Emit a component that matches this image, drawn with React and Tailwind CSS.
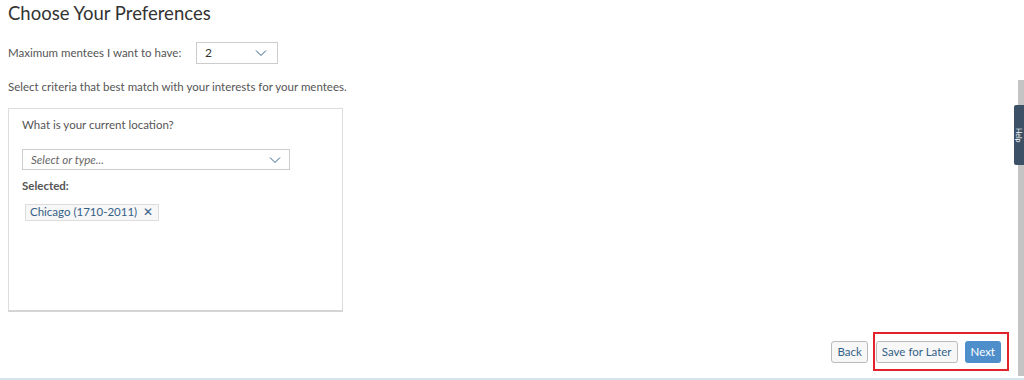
import React from 'react';

const Chevron = ({ className }) => (
  <svg className={className} width="12" height="8" viewBox="0 0 12 8" fill="none">
    <path d="M1 1.5L6 6.5L11 1.5" stroke="#346187" strokeWidth="1" />
  </svg>
);

const App = () => {
  return (
    <div
      className="relative w-[1024px] h-[380px] overflow-hidden bg-white text-[#333]"
      style={{ fontFamily: 'Lato, "Liberation Sans", sans-serif' }}
    >
      <div className="flex flex-col h-full pl-2">
        {/* Title */}
        <h1 className="text-[18.5px] leading-6 pt-[1px] text-[#333]">Choose Your Preferences</h1>

        {/* Max mentees */}
        <div className="flex items-center mt-[17px] h-[22px]">
          <span className="text-[11.5px] text-[#555] w-[188px]">Maximum mentees I want to have:</span>
          <div className="flex items-center justify-between w-[82px] h-[22px] border border-[#ccc] bg-white px-2">
            <span className="text-[12px] text-[#333]">2</span>
            <Chevron className="mr-[2px]" />
          </div>
        </div>

        <p className="text-[11.5px] text-[#555] mt-[15px] leading-4">
          Select criteria that best match with your interests for your mentees.
        </p>

        {/* Criteria card */}
        <div className="mt-[13px] w-[335px] h-[204px] border border-[#ddd] border-b-2 border-b-[#d5d5d5] px-[13px] pt-[7px]">
          <p className="text-[11.5px] text-[#555]">What is your current location?</p>
          <div className="mt-[16px] flex items-center justify-between w-[268px] h-[21px] border border-[#ccc] pl-2 pr-[8px]">
            <span className="text-[11.5px] italic text-[#666]">Select or type...</span>
            <Chevron />
          </div>
          <p className="mt-[7px] text-[11.5px] font-bold text-[#555]">Selected:</p>
          <div className="mt-[9px] ml-[3px] inline-flex items-center h-[17px] border border-[#ddd] bg-[#f7f7f7] pl-[4px] pr-[5px] gap-[6px]">
            <span className="text-[11.5px] text-[#346187] leading-none">Chicago (1710-2011)</span>
            <span className="text-[11.5px] text-[#346187] leading-none">✕</span>
          </div>
        </div>

        {/* Footer buttons */}
        <div className="flex justify-end items-center mt-auto mb-[7px] pr-[15px]">
          <button className="h-[22px] px-[5px] border border-[#bbb] rounded-[3px] bg-[#f7f7f7] text-[11.5px] text-[#346187] mr-[5px]">
            Back
          </button>
          <div className="flex items-center h-[39px] border-2 border-[#e2232b] pl-[1px] pr-[6px] gap-[7px]">
            <button className="h-[22px] px-[5px] border border-[#bbb] rounded-[3px] bg-[#f7f7f7] text-[11.5px] text-[#346187]">
              Save for Later
            </button>
            <button className="h-[22px] px-[6px] rounded-[3px] bg-[#4e8fcb] text-[11.5px] text-white">
              Next
            </button>
          </div>
        </div>
        <div className="h-[2px] bg-[#d6e4f0] -ml-2" />
      </div>

      {/* Scrollbar */}
      <div className="absolute right-0 top-[80px] w-[6px] h-[296px] bg-[#c4c4c4]" />
      {/* Side tab */}
      <div className="absolute right-0 top-[105px] w-[10px] h-[60px] bg-[#3d5166] rounded-tl-[2px] rounded-bl-[2px] flex items-center justify-center">
        <span className="text-[7px] leading-[8px] text-white whitespace-nowrap [writing-mode:vertical-rl]">Help</span>
      </div>
    </div>
  );
};

export default App;
